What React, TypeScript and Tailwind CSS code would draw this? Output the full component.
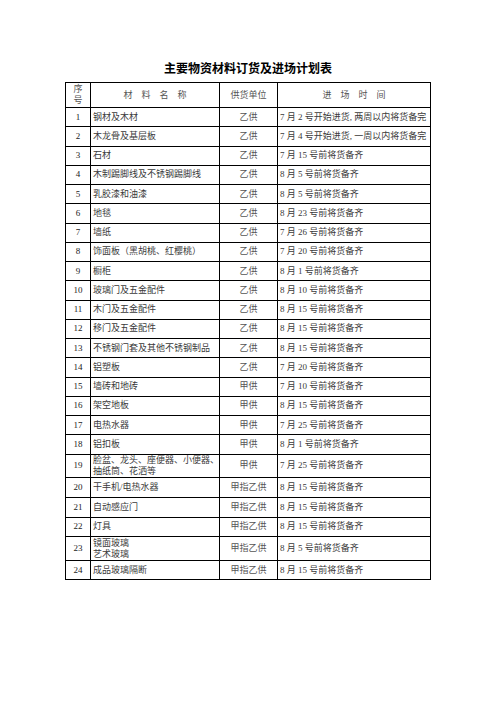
import React from "react";

type Row = { n: string; name: React.ReactNode; sup: string; time: string; h: string };

const rows: Row[] = [
  { n: "1", name: "钢材及木材", sup: "乙供", time: "7 月 2 号开始进货, 两周以内将货备完", h: "h-[19.25px]" },
  { n: "2", name: "木龙骨及基层板", sup: "乙供", time: "7 月 4 号开始进货, 一周以内将货备完", h: "h-[19.25px]" },
  { n: "3", name: "石材", sup: "乙供", time: "7 月 15 号前将货备齐", h: "h-[19.25px]" },
  { n: "4", name: "木制踢脚线及不锈钢踢脚线", sup: "乙供", time: "8 月 5 号前将货备齐", h: "h-[19.25px]" },
  { n: "5", name: "乳胶漆和油漆", sup: "乙供", time: "8 月 5 号前将货备齐", h: "h-[19.25px]" },
  { n: "6", name: "地毯", sup: "乙供", time: "8 月 23 号前将货备齐", h: "h-[19.25px]" },
  { n: "7", name: "墙纸", sup: "乙供", time: "7 月 26 号前将货备齐", h: "h-[19.25px]" },
  { n: "8", name: "饰面板（黑胡桃、红樱桃）", sup: "乙供", time: "7 月 20 号前将货备齐", h: "h-[19.25px]" },
  { n: "9", name: "橱柜", sup: "乙供", time: "8 月 1 号前将货备齐", h: "h-[19.25px]" },
  { n: "10", name: "玻璃门及五金配件", sup: "乙供", time: "8 月 10 号前将货备齐", h: "h-[19.25px]" },
  { n: "11", name: "木门及五金配件", sup: "乙供", time: "8 月 15 号前将货备齐", h: "h-[19.25px]" },
  { n: "12", name: "移门及五金配件", sup: "乙供", time: "8 月 15 号前将货备齐", h: "h-[19.25px]" },
  { n: "13", name: "不锈钢门套及其他不锈钢制品", sup: "乙供", time: "8 月 15 号前将货备齐", h: "h-[19.25px]" },
  { n: "14", name: "铝塑板", sup: "乙供", time: "7 月 20 号前将货备齐", h: "h-[19.25px]" },
  { n: "15", name: "墙砖和地砖", sup: "甲供", time: "7 月 10 号前将货备齐", h: "h-[19.25px]" },
  { n: "16", name: "架空地板", sup: "甲供", time: "8 月 15 号前将货备齐", h: "h-[19.25px]" },
  { n: "17", name: "电热水器", sup: "甲供", time: "7 月 25 号前将货备齐", h: "h-[19.25px]" },
  { n: "18", name: "铝扣板", sup: "甲供", time: "8 月 1 号前将货备齐", h: "h-[19.25px]" },
  {
    n: "19",
    name: (
      <>
        脸盆、龙头、座便器、小便器、
        <br />
        抽纸筒、花洒等
      </>
    ),
    sup: "甲供",
    time: "7 月 25 号前将货备齐",
    h: "h-[21px]",
  },
  { n: "20", name: "干手机/电热水器", sup: "甲指乙供", time: "8 月 15 号前将货备齐", h: "h-[20px]" },
  { n: "21", name: "自动感应门", sup: "甲指乙供", time: "8 月 15 号前将货备齐", h: "h-[20px]" },
  { n: "22", name: "灯具", sup: "甲指乙供", time: "8 月 15 号前将货备齐", h: "h-[19.5px]" },
  {
    n: "23",
    name: (
      <>
        镜面玻璃
        <br />
        艺术玻璃
      </>
    ),
    sup: "甲指乙供",
    time: "8 月 5 号前将货备齐",
    h: "h-[24px]",
  },
  { n: "24", name: "成品玻璃隔断", sup: "甲指乙供", time: "8 月 15 号前将货备齐", h: "h-[19px]" },
];

export default function App() {
  return (
    <div
      className="w-[496px] min-h-[702px] bg-white pt-[60px] text-[#3a3a3a]"
      style={{ fontFamily: '"Liberation Serif", "Noto Sans CJK SC", serif' }}
    >
      <h1
        className="text-center text-[12px] leading-[16px] font-bold text-black mb-[6px]"
        style={{ fontFamily: '"Noto Sans CJK SC", sans-serif' }}
      >
        主要物资材料订货及进场计划表
      </h1>
      <table className="mx-auto w-[365px] table-fixed border-collapse border border-black text-[9px] leading-[11px]">
        <colgroup>
          <col className="w-[25px]" />
          <col className="w-[129px]" />
          <col className="w-[58px]" />
          <col className="w-[153px]" />
        </colgroup>
        <thead>
          <tr className="h-[25px]">
            <th className="border border-black p-0 font-normal text-center text-[#555]">
              序
              <br />号
            </th>
            <th className="border border-black p-0 font-normal text-center text-[#555]">材　料　名　称</th>
            <th className="border border-black p-0 font-normal text-center text-[#555]">供货单位</th>
            <th className="border border-black p-0 font-normal text-center text-[#555]">进　场　时　间</th>
          </tr>
        </thead>
        <tbody>
          {rows.map((r) => (
            <tr key={r.n} className={r.h}>
              <td className="border border-black p-0 text-center text-[#222]">{r.n}</td>
              <td className="border border-black py-0 pl-[2px] pr-0 text-left">{r.name}</td>
              <td className="border border-black p-0 text-center text-[#555]">{r.sup}</td>
              <td className="border border-black py-0 pl-[2px] pr-0 text-left whitespace-nowrap overflow-hidden">{r.time}</td>
            </tr>
          ))}
        </tbody>
      </table>
    </div>
  );
}
